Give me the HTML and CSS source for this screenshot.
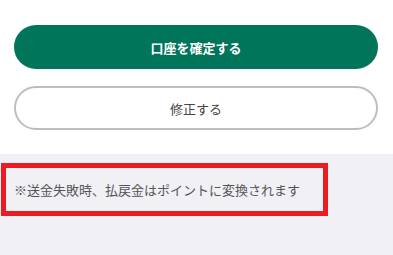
FILE: index.html
```html
<!DOCTYPE html>
<html lang="ja">

<head>
    <meta charset="UTF-8">
    <meta name="viewport" content="width=device-width, initial-scale=1.0">
    <title>口座確認</title>
    <link rel="stylesheet" href="styles.css">
</head>

<body>
    <div class="actions">
        <button class="btn btn-primary">口座を確定する</button>
        <button class="btn btn-outline">修正する</button>
    </div>

    <div class="note-area">
        <div class="note-box">
            <p>※送金失敗時、払戻金はポイントに変換されます</p>
        </div>
    </div>
</body>

</html>
```

FILE: styles.css
```css
body {
    font-family: "Noto Sans CJK JP", "Noto Sans", sans-serif;
    margin: 0;
    padding: 0;
    background: #ffffff;
}

.actions {
    display: flex;
    flex-direction: column;
    gap: 17px;
    padding: 25px 15px 24px 14px;
}

.btn {
    height: 44px;
    border-radius: 22px;
    font-family: inherit;
    font-size: 13px;
    cursor: pointer;
}

.btn-primary {
    background-color: #00755a;
    color: #ffffff;
    border: none;
    font-weight: bold;
}

.btn-outline {
    background-color: #ffffff;
    color: #444444;
    border: 2px solid #bdbdc2;
}

.note-area {
    background-color: #f0f0f5;
    padding-top: 9px;
    height: 92px;
}

.note-box {
    width: 309px;
    height: 43px;
    margin-left: 1px;
    border: 5px solid #ec1c24;
    display: flex;
    align-items: center;
    padding-left: 8px;
}

.note-box p {
    margin: 0;
    font-size: 13px;
    color: #555555;
}
```
